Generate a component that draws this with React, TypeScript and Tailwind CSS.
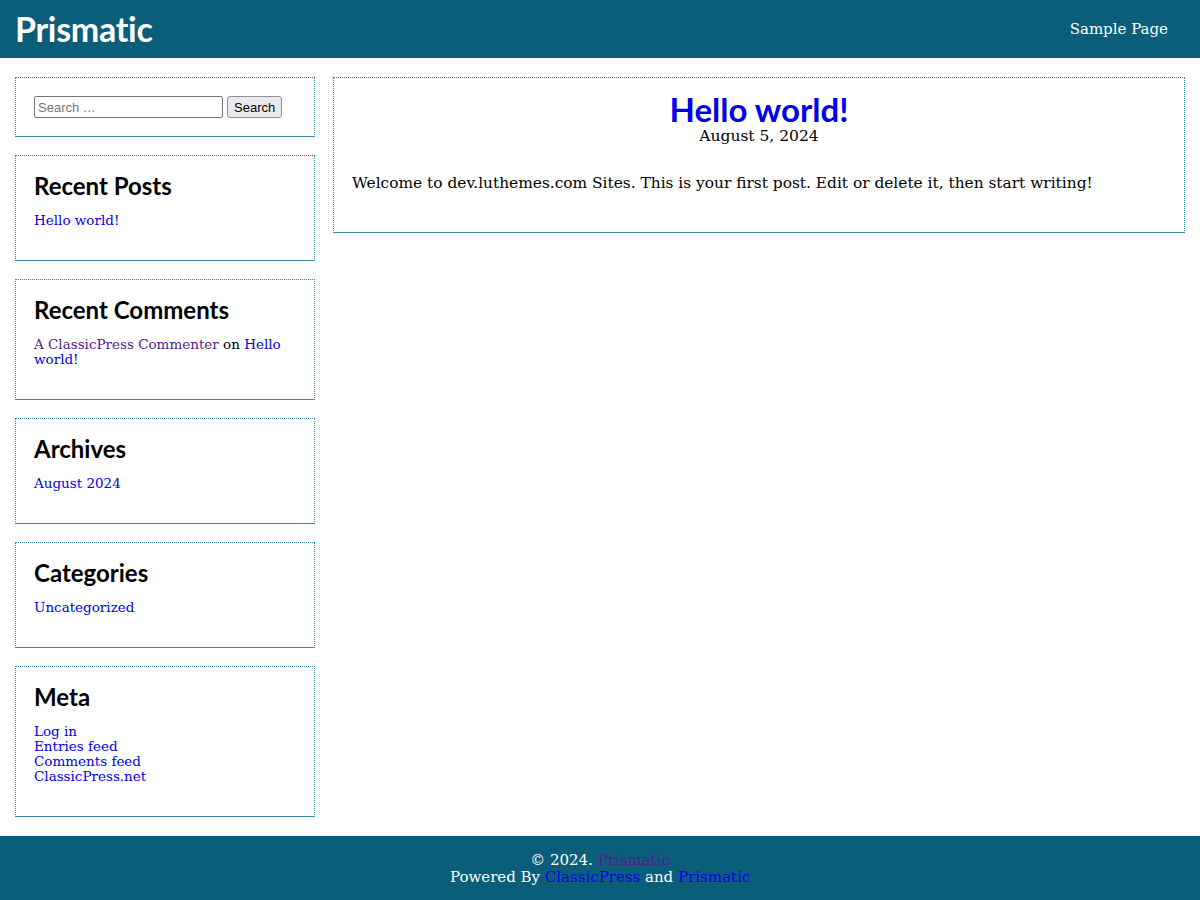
const heading = "font-['Lato','Open_Sans',sans-serif] font-bold";
const serif = "font-['DejaVu_Serif','Liberation_Serif',serif]";

function Widget({ title, children }: { title?: string; children: React.ReactNode }) {
  return (
    <section className="border border-dotted border-[#3b8ba5] [border-bottom-style:solid] p-[18px] bg-white">
      {title && <h2 className={`${heading} text-[24px] leading-[24px] text-black mb-[15px]`}>{title}</h2>}
      {children}
    </section>
  );
}

export default function App() {
  return (
    <div className={`min-h-[900px] flex flex-col bg-white ${serif}`}>
      <header className="h-[58px] bg-[#0b5e7a] flex items-center justify-between pl-[15px] pr-[32px]">
        <a className={`${heading} text-white text-[34px] leading-none tracking-[-0.3px]`}>Prismatic</a>
        <a className="text-white text-[15px]">Sample Page</a>
      </header>

      <div className="flex items-start gap-[18px] px-[15px] pt-[19px] pb-[19px]">
        <aside className="w-[300px] shrink-0 flex flex-col gap-[18px] text-[13.5px] leading-[15px]">
          <Widget>
            <form className="flex items-center gap-[4px] font-['Liberation_Sans',Arial,sans-serif] text-[13px]">
              <input
                type="search"
                placeholder="Search …"
                className="w-[189px] h-[22px] border border-[#767676] rounded-[2px] px-[3px] placeholder:text-[#757575] outline-none"
              />
              <button
                type="button"
                className="h-[22px] px-[6px] bg-[#e9e9ed] border border-[#8f8f9d] rounded-[3px] text-black"
              >
                Search
              </button>
            </form>
          </Widget>

          <Widget title="Recent Posts">
            <ul className="mb-[14px]">
              <li><a className="text-[#0000ee]">Hello world!</a></li>
            </ul>
          </Widget>

          <Widget title="Recent Comments">
            <ul className="mb-[14px]">
              <li>
                <a className="text-[#551a8b]">A ClassicPress Commenter</a> on{" "}
                <a className="text-[#0000ee]">Hello world!</a>
              </li>
            </ul>
          </Widget>

          <Widget title="Archives">
            <ul className="mb-[14px]">
              <li><a className="text-[#0000ee]">August 2024</a></li>
            </ul>
          </Widget>

          <Widget title="Categories">
            <ul className="mb-[14px]">
              <li><a className="text-[#0000ee]">Uncategorized</a></li>
            </ul>
          </Widget>

          <Widget title="Meta">
            <ul className="mb-[14px]">
              <li><a className="text-[#0000ee]">Log in</a></li>
              <li><a className="text-[#0000ee]">Entries feed</a></li>
              <li><a className="text-[#0000ee]">Comments feed</a></li>
              <li><a className="text-[#0000ee]">ClassicPress.net</a></li>
            </ul>
          </Widget>
        </aside>

        <main className="flex-1">
          <article className="border border-dotted border-[#3b8ba5] [border-bottom-style:solid] px-[18px] pt-[14px] pb-[36px]">
            <h1 className={`${heading} text-center text-[33px] leading-[34px] text-[#0000ee]`}>Hello world!</h1>
            <div className="text-center text-[15.5px] leading-[20px] text-black">August 5, 2024</div>
            <p className="mt-[24px] text-[15.4px] leading-[26px] text-black">
              Welcome to dev.luthemes.com Sites. This is your first post. Edit or delete it, then start writing!
            </p>
          </article>
        </main>
      </div>

      <footer className="mt-auto h-[65px] bg-[#0b5e7a] flex flex-col items-center justify-center text-[15px] leading-[17px] text-white">
        <div>© 2024. <a className="text-[#551a8b]">Prismatic</a></div>
        <div>
          Powered By <a className="text-[#0000ee]">ClassicPress</a> and <a className="text-[#0000ee]">Prismatic</a>
        </div>
      </footer>
    </div>
  );
}
